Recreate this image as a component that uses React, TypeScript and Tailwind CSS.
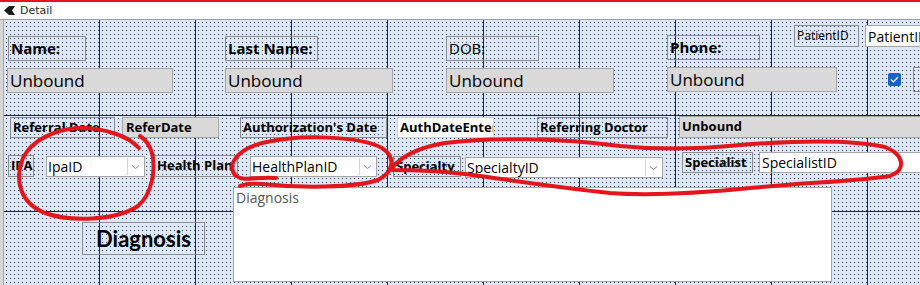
import React from 'react';

type BoxProps = { pos: string; text: string; extra?: string };

// bordered caption (transparent, bold)
const Caption = ({ pos, text, extra = '' }: BoxProps) => (
  <div
    className={`absolute ${pos} flex items-center overflow-hidden whitespace-nowrap border border-[#8c8c8c] px-[2px] font-bold text-black ${extra}`}
  >
    {text}
  </div>
);

const Field = ({ pos, text, extra = '' }: BoxProps) => (
  <div
    className={`absolute ${pos} flex items-center overflow-hidden whitespace-nowrap border border-[#a6a6a6] px-[2px] text-black ${extra}`}
  >
    {text}
  </div>
);

const Combo = ({ pos, text }: { pos: string; text: string }) => (
  <div
    className={`absolute ${pos} flex items-stretch overflow-hidden whitespace-nowrap border border-[#a6a6a6] bg-white text-[14px] text-black`}
  >
    <span className="flex flex-1 items-center px-[1px]">{text}</span>
    <span className="my-[1px] mr-[1px] flex w-[16px] items-center justify-center border-l border-[#d4d4d4]">
      <svg width="9" height="6" viewBox="0 0 9 6" fill="none">
        <path d="M1 1.5 L4.5 4.5 L8 1.5" stroke="#8a8a8a" strokeWidth="1" />
      </svg>
    </span>
  </div>
);

export default function App() {
  return (
    <div className="relative flex h-[285px] w-[920px] flex-col overflow-hidden bg-white font-['Open_Sans','Noto_Sans',sans-serif]">
      <div className="h-[2px] bg-[#e8141c]" />

      {/* section header */}
      <div className="flex h-[18px] items-center gap-[5px] border-b border-[#a0a0a0] bg-white pl-[4px]">
        <svg width="11" height="9" viewBox="0 0 11 9">
          <path d="M0 4.5 L5 0 L11 0 L8 4.5 L11 9 L5 9 Z" fill="#1a1a1a" />
        </svg>
        <span className="text-[11px] leading-none text-[#2a2a2a] font-['DejaVu_Sans',sans-serif]">Detail</span>
      </div>

      <div className="flex flex-1">
        <div className="w-[4px] border-r border-[#a8a8a8] bg-[#d6d6d6]" />

        {/* design surface */}
        <div className="relative flex-1 bg-[#dce6f5]">
          <svg className="absolute inset-0 h-full w-full">
            <defs>
              <pattern id="dots" width="4" height="4" patternUnits="userSpaceOnUse">
                <rect x="2" y="2" width="1" height="1" fill="#33415e" />
              </pattern>
              <pattern id="major" width="96" height="96" patternUnits="userSpaceOnUse">
                <rect x="95" y="0" width="1" height="96" fill="#1b2a48" />
                <rect x="0" y="95" width="96" height="1" fill="#1b2a48" />
              </pattern>
            </defs>
            <rect width="100%" height="100%" fill="url(#dots)" />
            <rect width="100%" height="100%" fill="url(#major)" />
          </svg>

          {/* row 1 */}
          <Caption pos="left-[4px] top-[16px] w-[78px] h-[25px]" text="Name:" extra="text-[15px] px-[1px]" />
          <Field pos="left-[3px] top-[48px] w-[166px] h-[25px]" text="Unbound" extra="bg-[#d9d9d9] text-[17px]" />
          <Caption pos="left-[221px] top-[16px] w-[93px] h-[25px]" text="Last Name:" extra="text-[15px] px-[1px]" />
          <Field pos="left-[221px] top-[48px] w-[168px] h-[25px]" text="Unbound" extra="bg-[#d9d9d9] text-[17px]" />
          <Caption pos="left-[442px] top-[16px] w-[93px] h-[25px]" text="DOB:" extra="text-[15px] font-medium px-[1px]" />
          <Field pos="left-[442px] top-[48px] w-[168px] h-[25px]" text="Unbound" extra="bg-[#d9d9d9] text-[17px]" />
          <Caption pos="left-[663px] top-[15px] w-[93px] h-[25px]" text="Phone:" extra="text-[15px] px-[1px]" />
          <Field pos="left-[663px] top-[47px] w-[170px] h-[25px]" text="Unbound" extra="bg-[#d9d9d9] text-[17px]" />

          <Caption pos="left-[790px] top-[5px] w-[65px] h-[22px]" text="PatientID" extra="text-[12px] font-normal text-[#707070] px-[1px]" />
          <Field pos="left-[861px] top-[5px] w-[80px] h-[22px]" text="PatientID" extra="bg-white text-[14px]" />
          <div className="absolute left-[884px] top-[53px] flex h-[13px] w-[13px] items-center justify-center rounded-[2px] bg-[#1763c5]">
            <svg width="9" height="7" viewBox="0 0 9 7" fill="none">
              <path d="M1 3.5 L3.5 6 L8 1" stroke="white" strokeWidth="1.2" />
            </svg>
          </div>
          <div className="absolute left-[909px] top-[47px] h-[25px] w-[30px] border border-[#8c8c8c]" />

          {/* row 2 */}
          <Caption pos="left-[6px] top-[97px] w-[105px] h-[21px]" text="Referral Date" extra="text-[13px]" />
          <Field pos="left-[118px] top-[97px] w-[97px] h-[21px]" text="ReferDate" extra="bg-[#d9d9d9] text-[13px] font-bold px-[3px]" />
          <Caption pos="left-[236px] top-[97px] w-[147px] h-[21px]" text="Authorization's Date" extra="text-[13px]" />
          <Field pos="left-[393px] top-[97px] w-[97px] h-[21px]" text="AuthDateEntered" extra="bg-white border-[#cfcfcf] text-[13px] font-bold" />
          <Caption pos="left-[533px] top-[97px] w-[131px] h-[21px]" text="Referring Doctor" extra="text-[13px]" />
          <Field pos="left-[675px] top-[96px] w-[250px] h-[22px]" text="Unbound" extra="bg-[#d9d9d9] text-[13px] font-bold" />

          {/* row 3 */}
          <Caption pos="left-[4px] top-[135px] w-[26px] h-[22px]" text="IPA" extra="text-[13px] px-[1px]" />
          <Combo pos="left-[42px] top-[136px] w-[99px] h-[21px]" text="IpaID" />
          <Caption pos="left-[150px] top-[135px] w-[84px] h-[22px]" text="Health Plan" extra="text-[13px]" />
          <Combo pos="left-[246px] top-[136px] w-[127px] h-[21px]" text="HealthPlanID" />
          <Caption pos="left-[389px] top-[136px] w-[68px] h-[21px]" text="Specialty" extra="text-[13px]" />
          <Combo pos="left-[461px] top-[137px] w-[198px] h-[21px]" text="SpecialtyID" />
          <Caption pos="left-[678px] top-[132px] w-[71px] h-[21px]" text="Specialist" extra="text-[13px]" />
          <Field pos="left-[755px] top-[132px] w-[170px] h-[21px]" text="SpecialistID" extra="bg-white text-[14px]" />

          {/* row 4 */}
          <Caption pos="left-[78px] top-[202px] w-[123px] h-[33px]" text="Diagnosis" extra="justify-center text-[22px] font-['Lato',sans-serif]" />
          <div className="absolute left-[229px] top-[167px] h-[95px] w-[599px] border border-[#a6a6a6] bg-white px-[2px] text-[14px] leading-[20px] text-[#555555]">
            Diagnosis
          </div>
        </div>
      </div>

      {/* red pen annotations drawn over the screenshot */}
      <svg className="pointer-events-none absolute inset-0" width="920" height="285" fill="none">
        <g stroke="#e3151d" strokeWidth="4" strokeLinecap="round" strokeLinejoin="round">
          <path d="M139 148 C128 136 105 128 80 128 C55 129 32 140 23 158 C14 180 20 203 45 213 C70 222 115 221 138 206 C152 194 156 170 152 153 C150 146 146 140 140 136" />
          <path d="M276 178 C258 176 244 182 236 176 C226 166 236 150 262 143 C300 134 360 136 382 148 C396 157 394 172 378 180 C355 188 300 188 262 184 C250 183 244 184 240 186" />
          <path d="M392 168 C400 158 415 148 445 143 C490 137 560 138 620 146 C660 150 700 149 740 145 C790 141 850 139 885 147 C905 155 906 170 890 176 C860 181 800 183 750 188 C700 193 650 196 610 193 C560 188 510 180 465 174 C440 171 410 170 392 170" />
        </g>
      </svg>
    </div>
  );
}
